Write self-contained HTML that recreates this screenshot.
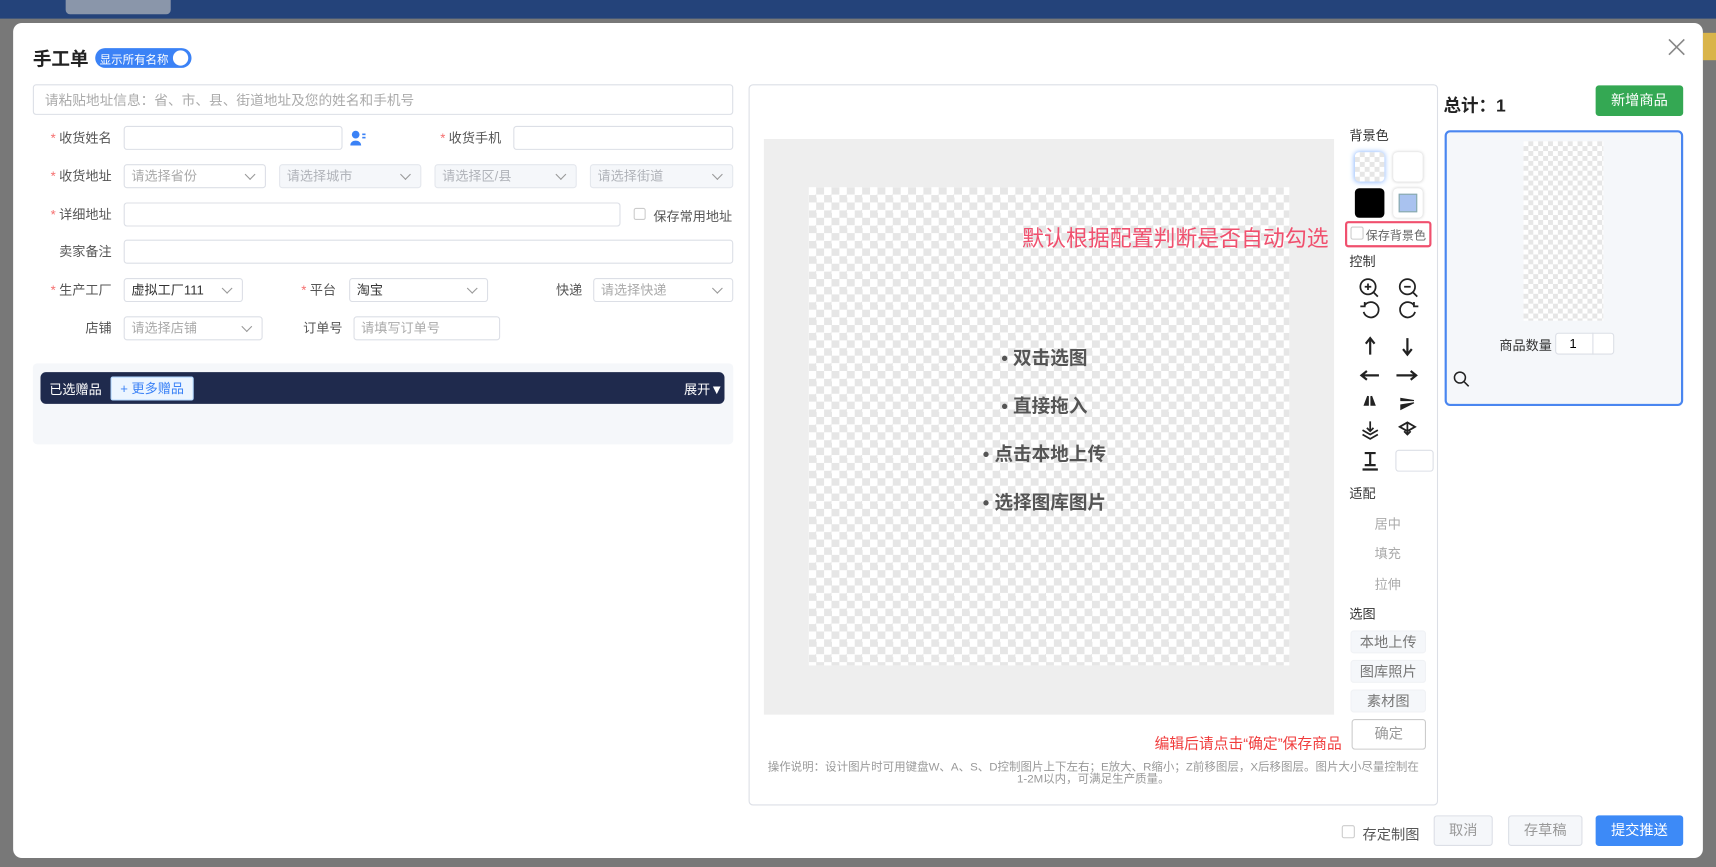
<!DOCTYPE html>
<html><head><meta charset="utf-8"><style>
*{box-sizing:border-box;margin:0;padding:0}
html,body{width:1716px;height:867px;overflow:hidden;background:#777;font-family:"Liberation Sans","Noto Sans CJK SC",sans-serif}
#w{position:absolute;left:0;top:0;width:1568px;height:792px;transform:scale(1.0944);transform-origin:0 0;background:#787878}
.a{position:absolute}
.top{left:0;top:0;width:1568px;height:17px;background:#24437a}
.modal{left:12px;top:21px;width:1544px;height:763px;background:#fff;border-radius:8px}
.inp{position:absolute;height:22px;border:1px solid #dcdfe6;border-radius:3px;background:#fff;font-size:12px;color:#aaa;padding-left:6px;line-height:20px}
.dis{background:#f5f7fa;border-color:#e4e7ed;color:#b0b3b9}
.sel::after{content:"";position:absolute;right:10px;top:5px;width:6px;height:6px;border-right:1px solid #999;border-bottom:1px solid #999;transform:rotate(45deg)}
.lb{position:absolute;font-size:12px;color:#555;text-align:right;line-height:22px}
.lb b{color:#f56c6c;font-weight:normal;margin-right:3px}
.chk{background-color:#fff;background-image:conic-gradient(#e6e6e6 25%,#fff 0 50%,#e6e6e6 0 75%,#fff 0);background-size:14px 14px}
.t{position:absolute;font-size:12px;color:#333}
.bul{position:absolute;font-size:17px;font-weight:bold;color:#555;white-space:nowrap}
.btn{position:absolute;border:1px solid #dcdfe6;border-radius:3px;font-size:13px;text-align:center;color:#999;background:#f5f7fa}
svg{position:absolute}
</style></head><body><div id="w">
<div class="a top"></div>
<div class="a" style="left:60px;top:0;width:96px;height:13px;background:#8a96aa;border-radius:0 0 4px 4px"></div>
<div class="a" style="left:1556px;top:30px;width:12px;height:25px;background:#d9b44a"></div>
<div class="a modal"></div>

<div class="t" style="left:30px;top:40px;font-size:17px;font-weight:bold;color:#222">手工单</div>
<div class="a" style="left:87px;top:44px;width:88px;height:18px;background:#3b82f6;border-radius:9px"></div>
<div class="t" style="left:91px;top:47px;font-size:10.5px;color:#fff">显示所有名称</div>
<div class="a" style="left:158px;top:46px;width:14px;height:14px;background:#fff;border-radius:50%"></div>
<svg style="left:1524px;top:35px" width="16" height="16"><path d="M1 1L15 15M15 1L1 15" stroke="#888" stroke-width="1.5"/></svg>

<div class="inp" style="left:30px;top:77px;width:640px;height:28px;line-height:28px;font-size:12.5px;padding-left:10px">请粘贴地址信息：省、市、县、街道地址及您的姓名和手机号</div>

<div class="lb" style="left:30px;top:115px;width:72px"><b>*</b>收货姓名</div>
<div class="inp" style="left:113px;top:115px;width:200px"></div>
<svg style="left:320px;top:119px" width="15" height="14"><circle cx="5" cy="4" r="3.5" fill="#3b82f6"/><path d="M0 14c0-6 10-6 10 0z" fill="#3b82f6"/><rect x="11" y="3" width="3" height="1.5" fill="#3b82f6"/><rect x="11" y="6" width="3" height="1.5" fill="#3b82f6"/></svg>
<div class="lb" style="left:380px;top:115px;width:78px"><b>*</b>收货手机</div>
<div class="inp" style="left:469px;top:115px;width:201px"></div>

<div class="lb" style="left:30px;top:150px;width:72px"><b>*</b>收货地址</div>
<div class="inp sel" style="left:113px;top:150px;width:130px">请选择省份</div>
<div class="inp sel dis" style="left:255px;top:150px;width:130px">请选择城市</div>
<div class="inp sel dis" style="left:397px;top:150px;width:130px">请选择区/县</div>
<div class="inp sel dis" style="left:539px;top:150px;width:131px">请选择街道</div>

<div class="lb" style="left:30px;top:185px;width:72px"><b>*</b>详细地址</div>
<div class="inp" style="left:113px;top:185px;width:454px"></div>
<div class="a" style="left:579px;top:190px;width:11px;height:11px;border:1px solid #ccc;border-radius:2px"></div>
<div class="t" style="left:597px;top:189px;color:#555">保存常用地址</div>

<div class="lb" style="left:30px;top:219px;width:72px">卖家备注</div>
<div class="inp" style="left:113px;top:219px;width:557px"></div>

<div class="lb" style="left:30px;top:254px;width:72px"><b>*</b>生产工厂</div>
<div class="inp sel" style="left:113px;top:254px;width:109px;color:#333">虚拟工厂111</div>
<div class="lb" style="left:250px;top:254px;width:57px"><b>*</b>平台</div>
<div class="inp sel" style="left:319px;top:254px;width:127px;color:#333">淘宝</div>
<div class="lb" style="left:480px;top:254px;width:52px">快递</div>
<div class="inp sel" style="left:542px;top:254px;width:128px">请选择快递</div>

<div class="lb" style="left:30px;top:289px;width:72px">店铺</div>
<div class="inp sel" style="left:113px;top:289px;width:127px">请选择店铺</div>
<div class="lb" style="left:250px;top:289px;width:63px">订单号</div>
<div class="inp" style="left:323px;top:289px;width:134px">请填写订单号</div>

<div class="a" style="left:30px;top:332px;width:640px;height:74px;background:#f5f7fa;border-radius:4px"></div>
<div class="a" style="left:37px;top:340px;width:625px;height:29px;background:#1f2a4d;border-radius:5px"></div>
<div class="t" style="left:45px;top:347px;color:#fff">已选赠品</div>
<div class="a" style="left:101px;top:344px;width:76px;height:22px;background:#ecf5ff;border:1px solid #b3d8ff;border-radius:2px;font-size:12px;color:#3b82f6;text-align:center;line-height:20px">+ 更多赠品</div>
<div class="t" style="left:625px;top:347px;color:#fff">展开▼</div>

<!-- middle -->
<div class="a" style="left:684px;top:77px;width:630px;height:659px;border:1px solid #dcdfe6;border-radius:4px"></div>
<div class="a" style="left:698px;top:127px;width:521px;height:526px;background:#eee"></div>
<div class="a chk" style="left:739px;top:171px;width:439px;height:437px"></div>
<div class="bul" style="left:915px;top:313px">• 双击选图</div>
<div class="bul" style="left:915px;top:357px">• 直接拖入</div>
<div class="bul" style="left:898px;top:401px">• 点击本地上传</div>
<div class="bul" style="left:898px;top:445px">• 选择图库图片</div>
<div class="t" style="left:934px;top:202px;font-size:20px;color:#f0506e">默认根据配置判断是否自动勾选</div>

<div class="t" style="left:1233px;top:115px">背景色</div>
<div class="a chk" style="left:1238px;top:139px;width:27px;height:27px;border-radius:4px;box-shadow:0 0 5px #7fb0ff;background-size:9px 9px"></div>
<div class="a" style="left:1273px;top:139px;width:27px;height:27px;border-radius:4px;box-shadow:0 0 3px #ccc;background:#fff"></div>
<div class="a" style="left:1238px;top:172px;width:27px;height:27px;border-radius:4px;background:#000"></div>
<div class="a" style="left:1273px;top:172px;width:27px;height:27px;border-radius:4px;box-shadow:0 0 3px #ccc;background:#fff"></div>
<div class="a" style="left:1278px;top:177px;width:17px;height:17px;background:#a9c2ef;border:1px solid #8aa"></div>
<div class="a" style="left:1229px;top:202px;width:79px;height:24px;border:2px solid #f0506e;border-radius:3px"></div>
<div class="a" style="left:1234px;top:207px;width:12px;height:12px;border:1px solid #ccc;border-radius:2px;background:#fff"></div>
<div class="t" style="left:1248px;top:207px;font-size:11px;color:#666">保存背景色</div>
<div class="t" style="left:1233px;top:230px">控制</div>
<svg style="left:1240px;top:252px" width="60" height="180" fill="none" stroke="#222" stroke-width="1.6">
<circle cx="10" cy="10" r="7"/><path d="M15 15l4 4M7 10h6M10 7v6"/>
<circle cx="46" cy="10" r="7"/><path d="M51 15l4 4M43 10h6"/>
<path d="M6 33a7 7 0 1 0 1-6"/><path d="M3 28l4 0 0-4" />
<path d="M53 33a7 7 0 1 1-1-6"/><path d="M56 28l-4 0 0-4"/>
<path d="M12 58V72M8 62l4-5 4 5" stroke-width="2"/>
<path d="M46 57V71M42 67l4 5 4-5" stroke-width="2"/>
<path d="M4 91h16M9 87l-5 4 5 4" stroke-width="2"/>
<path d="M36 91h18M49 87l5 4-5 4" stroke-width="2"/>
<path d="M10 110l-3 8h3zM13 110l3 8h-3z" fill="#222"/>
<path d="M40 112l12 2-12 0zM40 118l12-2-12 6z" fill="#222" stroke-width="1"/>
<path d="M12 133v9M9 139l3 3 3-3M5 141l7 4 7-4M5 145l7 4 7-4"/>
<path d="M46 134v11M43 142l3 3 3-3M39 138l7-4 7 4-7 4z"/>
<path d="M7 162h10M12 162v11M7 173h10M5 177h14" stroke-width="2"/>
</svg>
<div class="a" style="left:1275px;top:411px;width:35px;height:20px;border:1px solid #dcdfe6;border-radius:3px"></div>
<div class="t" style="left:1233px;top:442px">适配</div>
<div class="t" style="left:1256px;top:470px;color:#aaa">居中</div>
<div class="t" style="left:1256px;top:497px;color:#aaa">填充</div>
<div class="t" style="left:1256px;top:525px;color:#aaa">拉伸</div>
<div class="t" style="left:1233px;top:552px">选图</div>
<div class="btn" style="left:1234px;top:576px;width:69px;height:21px;line-height:19px;border-color:#f0f2f5;color:#777">本地上传</div>
<div class="btn" style="left:1234px;top:603px;width:69px;height:21px;line-height:19px;border-color:#f0f2f5;color:#777">图库照片</div>
<div class="btn" style="left:1234px;top:630px;width:69px;height:21px;line-height:19px;border-color:#f0f2f5;color:#777">素材图</div>
<div class="btn" style="left:1235px;top:657px;width:68px;height:28px;line-height:26px;background:#fff;border-color:#ccc">确定</div>
<div class="t" style="left:1046px;top:668px;width:180px;text-align:right;font-size:13.5px;color:#f03c3c;white-space:nowrap">编辑后请点击“确定”保存商品</div>
<div class="t" style="left:688px;top:696px;width:622px;text-align:center;font-size:10.5px;color:#999;line-height:11px">操作说明：设计图片时可用键盘W、A、S、D控制图片上下左右；E放大、R缩小；Z前移图层，X后移图层。图片大小尽量控制在<br>1-2M以内，可满足生产质量。</div>

<!-- right -->
<div class="t" style="left:1319px;top:83px;font-size:16px;font-weight:bold;color:#222">总计：1</div>
<div class="a" style="left:1458px;top:78px;width:80px;height:28px;background:#34a853;border-radius:3px;color:#fff;font-size:13px;text-align:center;line-height:28px">新增商品</div>
<div class="a" style="left:1320px;top:119px;width:218px;height:252px;background:#f5f7fa;border:2px solid #4a86f0;border-radius:5px"></div>
<div class="a chk" style="left:1392px;top:129px;width:73px;height:164px;background-size:9px 9px"></div>
<div class="t" style="left:1370px;top:307px;color:#333">商品数量</div>
<div class="a" style="left:1421px;top:304px;width:54px;height:20px;background:#fff;border:1px solid #dcdfe6;border-radius:3px;font-size:12px;padding-left:12px;line-height:18px">1</div>
<div class="a" style="left:1455px;top:304px;width:1px;height:20px;background:#dcdfe6"></div>
<svg style="left:1328px;top:339px" width="15" height="15" fill="none" stroke="#222" stroke-width="1.4"><circle cx="6" cy="6" r="5"/><path d="M10 10l4 4"/></svg>

<!-- footer -->
<div class="a" style="left:1226px;top:754px;width:12px;height:12px;border:1px solid #ccc;border-radius:2px"></div>
<div class="t" style="left:1245px;top:752px;font-size:13px;color:#555">存定制图</div>
<div class="btn" style="left:1310px;top:745px;width:54px;height:28px;line-height:26px">取消</div>
<div class="btn" style="left:1378px;top:745px;width:68px;height:28px;line-height:26px">存草稿</div>
<div class="a" style="left:1458px;top:745px;width:80px;height:28px;background:#3d8af7;border-radius:3px;color:#fff;font-size:13px;text-align:center;line-height:28px">提交推送</div>
</div></body></html>
